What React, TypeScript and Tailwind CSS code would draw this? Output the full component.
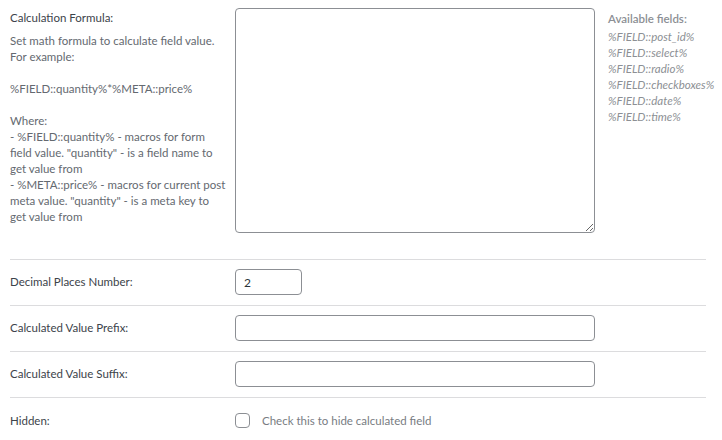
import React from "react";

export default function App() {
  return (
    <div className="bg-white w-[722px] h-[440px] overflow-hidden text-[11.5px] leading-[16px] font-['Lato','Liberation_Sans',sans-serif]">
      <div className="pl-[10px] pr-[16px]">
        {/* Row 1 */}
        <div className="flex pt-[8px] pb-[26px]">
          <div className="w-[225px] shrink-0 pt-[2px] pr-[8px]">
            <div className="text-[#3c434a]">Calculation Formula:</div>
            <div className="mt-[7px] text-[#646970]">
              <div>Set math formula to calculate field value. For example:</div>
              <div className="h-[16px]"></div>
              <div>%FIELD::quantity%*%META::price%</div>
              <div className="h-[16px]"></div>
              <div>Where:</div>
              <div>- %FIELD::quantity% - macros for form field value. "quantity" - is a field name to get value from</div>
              <div>- %META::price% - macros for current post meta value. "quantity" - is a meta key to get value from</div>
            </div>
          </div>
          <textarea className="w-[360px] h-[225px] shrink-0 border border-[#8c8f94] rounded-[4px] bg-white outline-none p-2" />
          <div className="ml-[13px] pt-[3px] text-[#8c8f94] whitespace-nowrap">
            <div className="font-semibold">Available fields:</div>
            <div className="italic mt-[2px]">
              <div>%FIELD::post_id%</div>
              <div>%FIELD::select%</div>
              <div>%FIELD::radio%</div>
              <div>%FIELD::checkboxes%</div>
              <div>%FIELD::date%</div>
              <div>%FIELD::time%</div>
            </div>
          </div>
        </div>
        {/* Row 2 */}
        <div className="flex items-center border-t border-[#dcdcde] pt-[9px] pb-[10px]">
          <div className="w-[225px] shrink-0 text-[#3c434a]">Decimal Places Number:</div>
          <input
            type="text"
            defaultValue="2"
            className="w-[67px] h-[26px] border border-[#8c8f94] rounded-[4px] px-[8px] text-[#2c3338] text-[12px] outline-none"
          />
        </div>
        {/* Row 3 */}
        <div className="flex items-center border-t border-[#dcdcde] pt-[9px] pb-[10px]">
          <div className="w-[225px] shrink-0 text-[#3c434a]">Calculated Value Prefix:</div>
          <input
            type="text"
            className="w-[360px] h-[26px] border border-[#8c8f94] rounded-[4px] px-[8px] text-[#2c3338] outline-none"
          />
        </div>
        {/* Row 4 */}
        <div className="flex items-center border-t border-[#dcdcde] pt-[9px] pb-[10px]">
          <div className="w-[225px] shrink-0 text-[#3c434a]">Calculated Value Suffix:</div>
          <input
            type="text"
            className="w-[360px] h-[26px] border border-[#8c8f94] rounded-[4px] px-[8px] text-[#2c3338] outline-none"
          />
        </div>
        {/* Row 5 */}
        <div className="flex items-center border-t border-[#dcdcde] h-[46px]">
          <div className="w-[225px] shrink-0 text-[#3c434a]">Hidden:</div>
          <div className="flex items-center">
            <span className="w-[15px] h-[15px] border border-[#8c8f94] rounded-[4px] bg-white"></span>
            <span className="ml-[12px] text-[#787c82]">Check this to hide calculated field</span>
          </div>
        </div>
      </div>
    </div>
  );
}
